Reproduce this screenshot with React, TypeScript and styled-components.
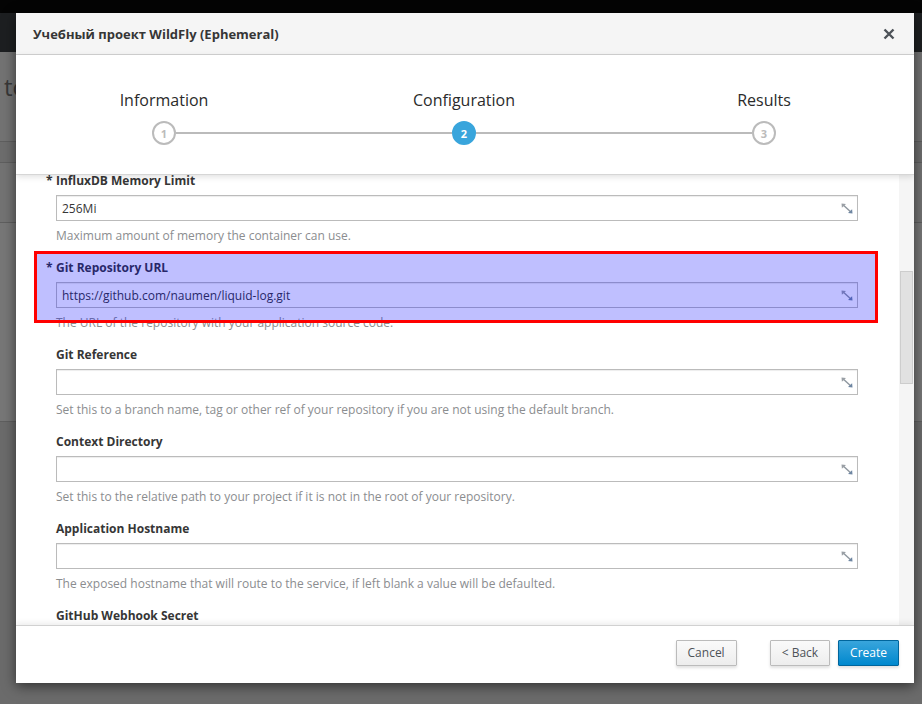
import React, { useLayoutEffect, useRef, useState } from "react";
import styled, { createGlobalStyle, css } from "styled-components";

const GlobalStyle = createGlobalStyle`
  html, body { margin: 0; padding: 0; }
  body {
    font-family: "Open Sans", "Noto Sans", "Liberation Sans", sans-serif;
    background: #6b6b6b;
    overflow: hidden;
  }
  * { box-sizing: border-box; }
`;

/* ---------- backdrop page ---------- */
const Page = styled.div`
  position: relative;
  width: 922px;
  height: 704px;
  overflow: hidden;
  display: flex;
  flex-direction: column;
  background: #6b6b6b;
`;

const TopBar = styled.div`
  height: 13px;
  background: #040404;
`;

const NavBar = styled.div`
  height: 39px;
  background: #1d1f21;
`;

const PageTitle = styled.div`
  height: 89px;
  background: #737373;
  padding: 18px 0 0 4px;
  font-size: 24px;
  font-weight: 400;
  color: #383838;
`;

const Band = styled.div<{ $h: number; $bg: string }>`
  height: ${(p) => p.$h}px;
  background: ${(p) => p.$bg};
  border-top: 1px solid #5f5f5f;
`;

/* ---------- modal ---------- */
const Modal = styled.div`
  position: absolute;
  left: 16px;
  top: 13px;
  width: 898px;
  height: 670px;
  background: #fff;
  display: flex;
  flex-direction: column;
  overflow: hidden;
  box-shadow: 0 3px 12px rgba(0, 0, 0, 0.55);
`;

const Header = styled.div`
  flex: none;
  height: 42px;
  background: #f5f5f5;
  border-bottom: 1px solid #d1d1d1;
  display: flex;
  align-items: center;
  justify-content: space-between;
  padding: 0 19px 0 17px;
`;

const Title = styled.h4`
  margin: 0;
  font-size: 13px;
  font-weight: 700;
  color: #363636;
`;

const CloseButton = styled.button`
  border: 0;
  background: none;
  padding: 0;
  width: 12px;
  height: 12px;
  display: flex;
  cursor: pointer;
`;

const Steps = styled.div`
  flex: none;
  height: 120px;
  background: #fff;
  border-bottom: 1px solid #d6d6d6;
  box-shadow: 0 2px 6px rgba(0, 0, 0, 0.12);
  position: relative;
  z-index: 1;
  padding-top: 35px;
`;

const StepGrid = styled.div`
  display: grid;
  grid-template-columns: repeat(3, 300px);
  margin-left: -2px;
`;

const Step = styled.div`
  display: flex;
  flex-direction: column;
`;

const StepLabel = styled.div`
  text-align: center;
  font-size: 16px;
  line-height: 20px;
  color: #2b2b2b;
  margin-bottom: 11px;
`;

const Track = styled.div`
  display: flex;
  align-items: center;
  height: 24px;
`;

const Line = styled.div<{ $hidden?: boolean }>`
  flex: 1;
  height: 2px;
  background: ${(p) => (p.$hidden ? "transparent" : "#bbbbbb")};
`;

const Circle = styled.div<{ $active?: boolean }>`
  flex: none;
  width: 24px;
  height: 24px;
  border-radius: 50%;
  border: 2px solid ${(p) => (p.$active ? "#39a5dc" : "#bbbbbb")};
  background: ${(p) => (p.$active ? "#39a5dc" : "#fff")};
  color: ${(p) => (p.$active ? "#fff" : "#bbbbbb")};
  font-size: 11px;
  font-weight: 700;
  display: flex;
  align-items: center;
  justify-content: center;
`;

const BodyRow = styled.div`
  flex: 1;
  min-height: 0;
  display: flex;
  background: #fff;
`;

const Viewport = styled.div`
  flex: 1;
  min-width: 0;
  overflow-y: auto;
  position: relative;
  padding: 30px 41px 24px 40px;
  scrollbar-width: none;
  &::-webkit-scrollbar {
    display: none;
  }
`;

const ScrollTrack = styled.div`
  flex: none;
  width: 15px;
  background: #f5f5f5;
  padding: 0 1px 0 1px;
`;

const Thumb = styled.div`
  width: 100%;
  background: #e1e1e1;
  border: 1px solid #cdcdcd;
`;

const FormGroup = styled.div`
  position: relative;
  margin-bottom: 14px;
`;

const Label = styled.label<{ $required?: boolean }>`
  display: block;
  font-size: 12px;
  font-weight: 700;
  line-height: 18px;
  color: #363636;
  margin-bottom: 5px;
  ${(p) =>
    p.$required &&
    css`
      &::before {
        content: "*";
        display: inline-block;
        width: 10px;
        margin-left: -10px;
      }
    `}
`;

const InputBox = styled.div`
  display: flex;
  align-items: center;
  height: 26px;
  border: 1px solid #bbbbbb;
  background: #fff;
  box-shadow: inset 0 1px 1px rgba(3, 3, 3, 0.075);
  padding: 0 4px 0 5px;
`;

const TextInput = styled.input`
  flex: 1;
  min-width: 0;
  border: 0;
  outline: none;
  background: transparent;
  padding: 0;
  font-family: "Open Sans", "Noto Sans", sans-serif;
  font-size: 12px;
  color: #363636;
`;

const Help = styled.div`
  margin-top: 6px;
  font-size: 12px;
  line-height: 18px;
  color: #8b8d8f;
`;

const Highlight = styled.div`
  position: absolute;
  left: -22px;
  top: -8px;
  width: 844px;
  height: 72px;
  border: 3px solid #ff0000;
  background: rgba(0, 0, 255, 0.25);
  pointer-events: none;
`;

const Footer = styled.div`
  flex: none;
  height: 58px;
  background: #fff;
  border-top: 1px solid #d1d1d1;
  box-shadow: 0 -2px 6px rgba(0, 0, 0, 0.08);
  position: relative;
  z-index: 1;
  display: flex;
  justify-content: flex-end;
  align-items: flex-start;
  padding: 14px 15px 0;
`;

const Button = styled.button<{ $primary?: boolean; $gap?: number }>`
  height: 26px;
  padding: 0 11px;
  margin-right: ${(p) => p.$gap ?? 0}px;
  font-family: "Open Sans", "Noto Sans", sans-serif;
  font-size: 12px;
  line-height: 24px;
  cursor: pointer;
  border-radius: 1px;
  box-shadow: 0 2px 3px rgba(3, 3, 3, 0.12);
  ${(p) =>
    p.$primary
      ? css`
          color: #fff;
          background: linear-gradient(#39a5dc, #0088ce);
          border: 1px solid #00659c;
        `
      : css`
          color: #4d5258;
          background: linear-gradient(#fafafa, #ededed);
          border: 1px solid #bbbbbb;
        `}
`;

const ExpandIcon = () => (
  <svg width="12" height="11" viewBox="0 0 12 11" aria-hidden="true">
    <path d="M2.2 2 L9.6 8.8" stroke="#8f979f" strokeWidth="1.4" />
    <path d="M0.5 0.5 L5 0.9 L0.9 4.8 Z" fill="#9a9fa5" />
    <path d="M11.5 10.5 L7 10.1 L11.1 6.2 Z" fill="#6e86a2" />
  </svg>
);

const CloseIcon = () => (
  <svg width="12" height="12" viewBox="0 0 12 12" aria-hidden="true">
    <path d="M1.5 1.5 L10.5 10.5 M10.5 1.5 L1.5 10.5" stroke="#4d5258" strokeWidth="2.4" />
  </svg>
);

type Field = {
  label: string;
  value?: string;
  help: string;
  required?: boolean;
};

const before: Field[] = [
  { label: "Name", value: "liquid-log", help: "The name for the application.", required: true },
  { label: "Namespace", value: "openshift", help: "The OpenShift Namespace where the ImageStream resides.", required: true },
  { label: "WildFly Memory Limit", value: "512Mi", help: "Maximum amount of memory the container can use.", required: true },
  { label: "InfluxDB Version", value: "1.5", help: "Version of InfluxDB image to be used.", required: true },
];

const after: Field[] = [
  { label: "Git Reference", help: "Set this to a branch name, tag or other ref of your repository if you are not using the default branch." },
  { label: "Context Directory", help: "Set this to the relative path to your project if it is not in the root of your repository." },
  { label: "Application Hostname", help: "The exposed hostname that will route to the service, if left blank a value will be defaulted." },
  { label: "GitHub Webhook Secret", help: "Github trigger secret. A difficult to guess string encoded as part of the webhook URL." },
  { label: "Generic Webhook Secret", help: "A secret string used to configure the Generic webhook." },
  { label: "ImageStream Namespace", value: "openshift", help: "Namespace in which the ImageStreams are installed.", required: true },
  { label: "Maven mirror URL", help: "Maven mirror to use for S2I builds." },
  { label: "Artifact Directories", help: "List of directories from which archives will be copied into the deployment folder." },
  { label: "Volume Capacity", value: "1Gi", help: "Volume space available for data, e.g. 512Mi, 2Gi.", required: true },
  { label: "Database Name", value: "liquidlog", help: "Name of the InfluxDB database accessed.", required: true },
  { label: "InfluxDB Admin User", value: "admin", help: "Username for the InfluxDB admin user.", required: true },
  { label: "InfluxDB Admin Password", help: "Password for the InfluxDB admin user.", required: true },
  { label: "Grafana Memory Limit", value: "256Mi", help: "Maximum amount of memory the container can use.", required: true },
  { label: "Grafana Version", value: "5.0", help: "Version of Grafana image to be used.", required: true },
];

const FieldGroup = ({ field }: { field: Field }) => (
  <FormGroup>
    <Label $required={field.required}>{field.label}</Label>
    <InputBox>
      <TextInput readOnly value={field.value ?? ""} />
      <ExpandIcon />
    </InputBox>
    <Help>{field.help}</Help>
  </FormGroup>
);

const steps = [
  { n: 1, label: "Information" },
  { n: 2, label: "Configuration", active: true },
  { n: 3, label: "Results" },
];

export default function App() {
  const bodyRef = useRef<HTMLDivElement>(null);
  const anchorRef = useRef<HTMLDivElement>(null);
  const [thumb, setThumb] = useState({ top: 95, height: 112 });

  useLayoutEffect(() => {
    const el = bodyRef.current;
    if (el && anchorRef.current) {
      el.scrollTop = anchorRef.current.offsetTop + 3;
      const ch = el.clientHeight;
      const sh = el.scrollHeight;
      setThumb({
        top: Math.round((el.scrollTop / sh) * ch),
        height: Math.round((ch * ch) / sh),
      });
    }
  }, []);

  return (
    <>
      <GlobalStyle />
      <Page>
        <TopBar />
        <NavBar />
        <PageTitle>to</PageTitle>
        <Band $h={21} $bg="#6d6d6d" />
        <Band $h={60} $bg="#737373" />
        <Band $h={199} $bg="#777777" />
        <Band $h={283} $bg="#6b6b6b" />

        <Modal role="dialog">
          <Header>
            <Title>Учебный проект WildFly (Ephemeral)</Title>
            <CloseButton aria-label="Close">
              <CloseIcon />
            </CloseButton>
          </Header>

          <Steps>
            <StepGrid>
              {steps.map((s, i) => (
                <Step key={s.n}>
                  <StepLabel>{s.label}</StepLabel>
                  <Track>
                    <Line $hidden={i === 0} />
                    <Circle $active={s.active}>{s.n}</Circle>
                    <Line $hidden={i === steps.length - 1} />
                  </Track>
                </Step>
              ))}
            </StepGrid>
          </Steps>

          <BodyRow>
            <Viewport ref={bodyRef}>
              {before.map((f) => (
                <FieldGroup key={f.label} field={f} />
              ))}
              <FormGroup ref={anchorRef}>
                <Label $required>InfluxDB Memory Limit</Label>
                <InputBox>
                  <TextInput readOnly value="256Mi" />
                  <ExpandIcon />
                </InputBox>
                <Help>Maximum amount of memory the container can use.</Help>
              </FormGroup>
              <FormGroup>
                <Label $required>Git Repository URL</Label>
                <InputBox>
                  <TextInput readOnly value="https://github.com/naumen/liquid-log.git" />
                  <ExpandIcon />
                </InputBox>
                <Help>The URL of the repository with your application source code.</Help>
                <Highlight />
              </FormGroup>
              {after.map((f) => (
                <FieldGroup key={f.label} field={f} />
              ))}
            </Viewport>
            <ScrollTrack>
              <Thumb style={{ marginTop: thumb.top, height: thumb.height }} />
            </ScrollTrack>
          </BodyRow>

          <Footer>
            <Button $gap={33}>Cancel</Button>
            <Button $gap={8}>&lt; Back</Button>
            <Button $primary>Create</Button>
          </Footer>
        </Modal>
      </Page>
    </>
  );
}
